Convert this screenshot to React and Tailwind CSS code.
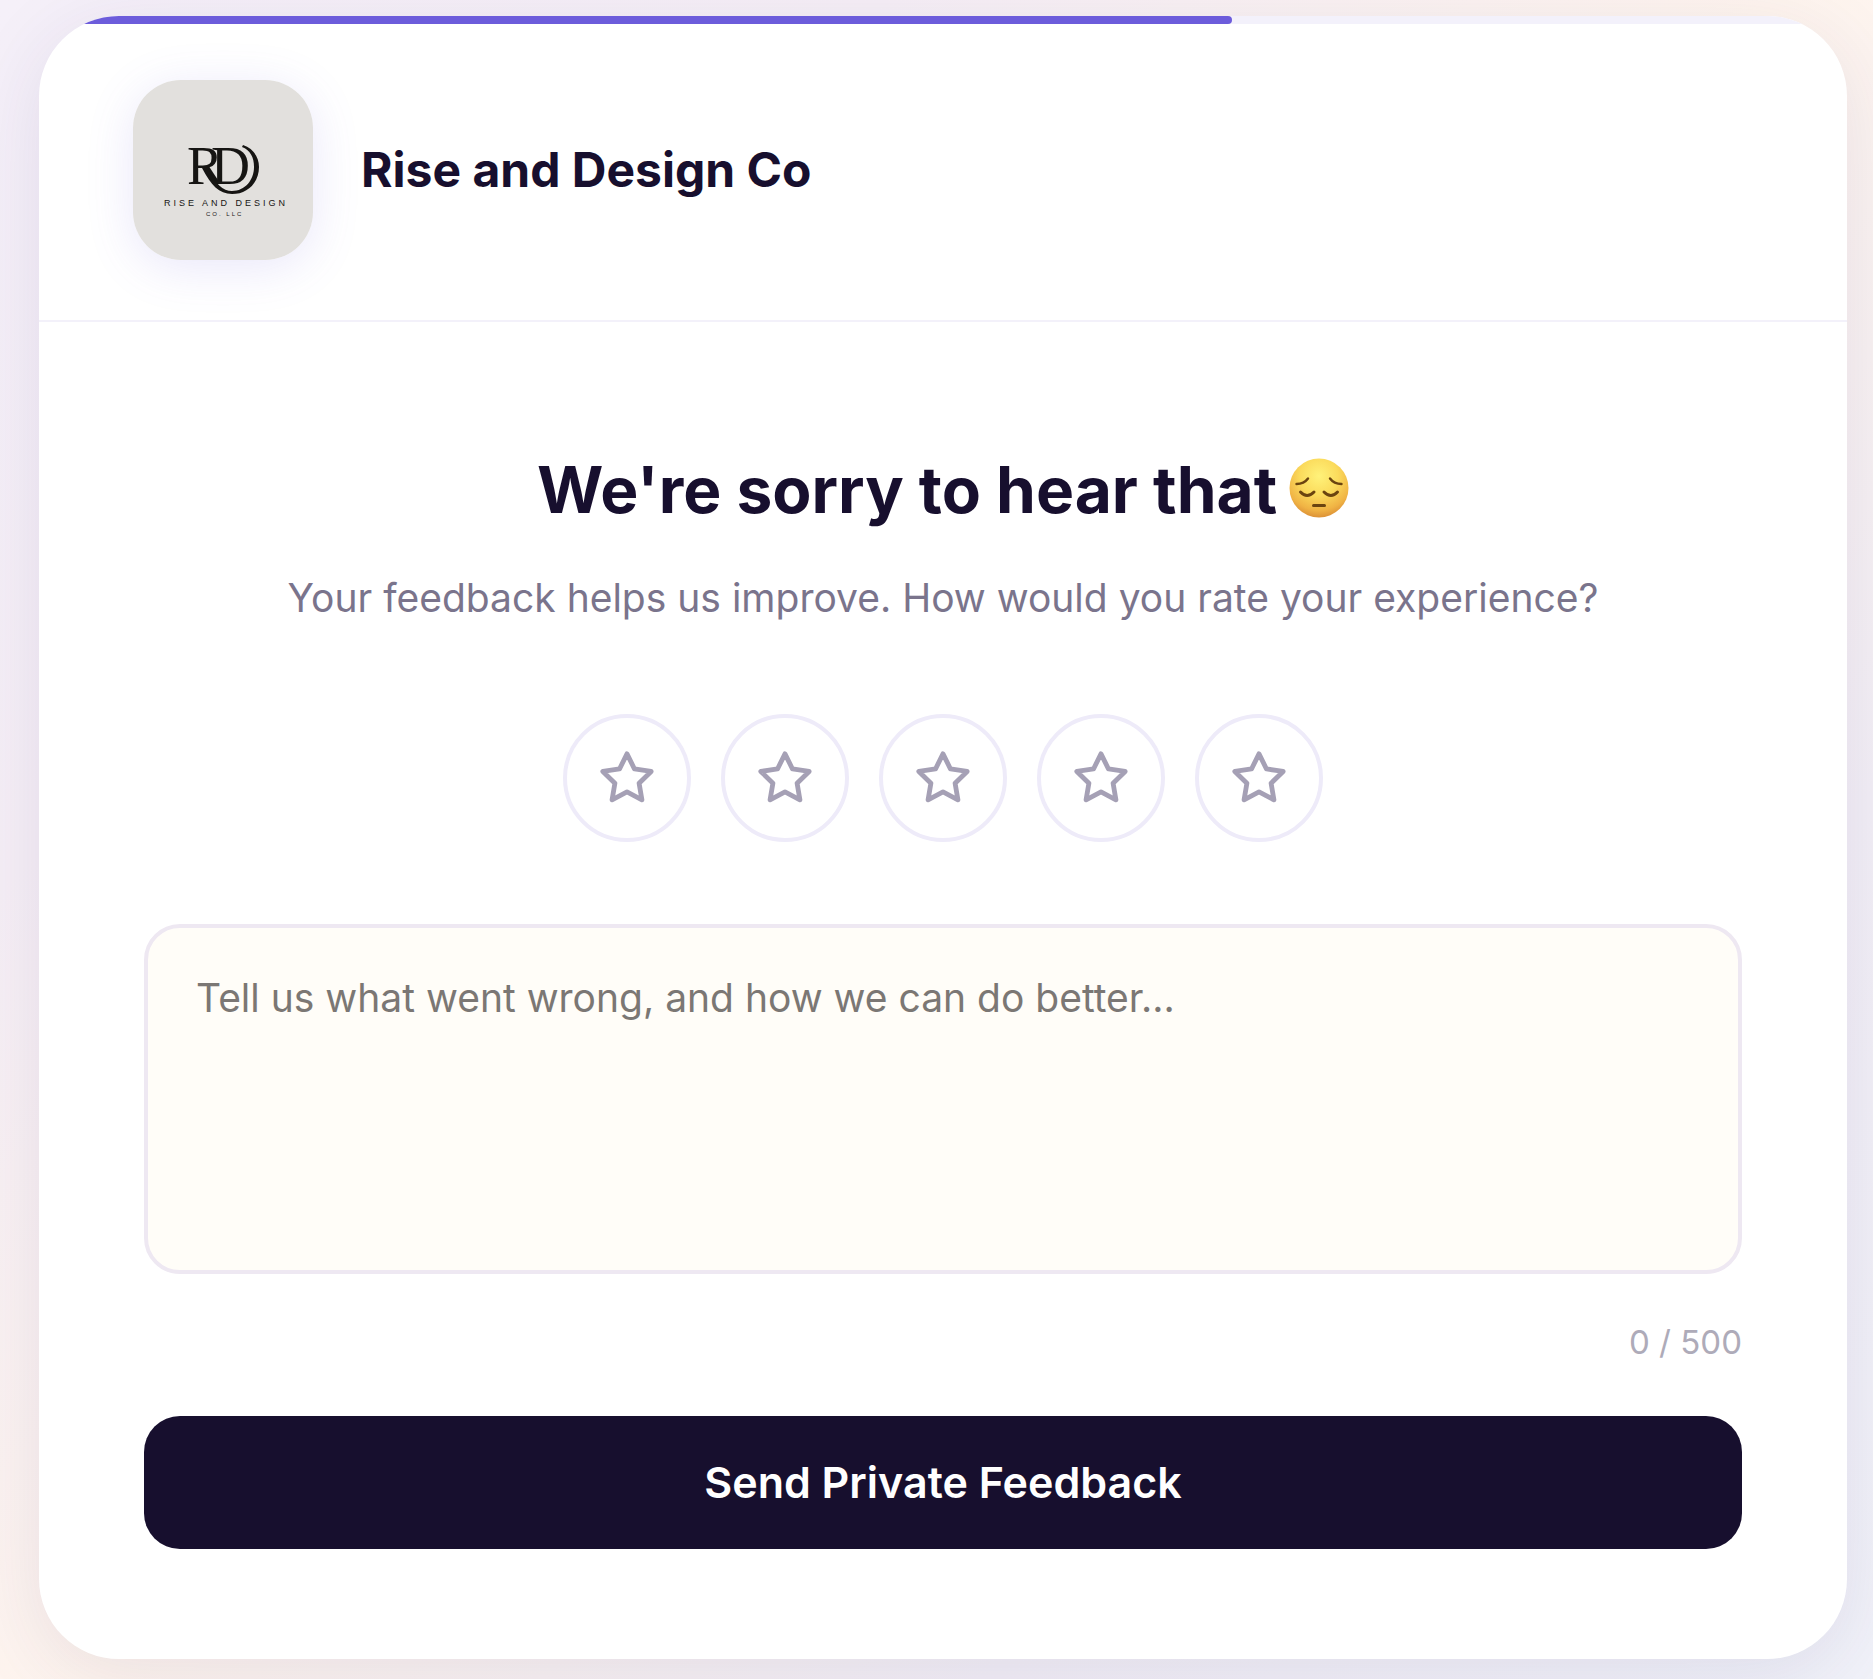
import { useState } from 'react'

const STARS = [1, 2, 3, 4, 5]
const MAX_LENGTH = 500
const PROGRESS = 66

const StarIcon = () => (
    <svg viewBox="0 0 24 24" className="w-[58px] h-[58px]" fill="none" stroke="currentColor" strokeWidth="2" strokeLinecap="round" strokeLinejoin="round" aria-hidden="true">
        <polygon points="12 2 15.09 8.26 22 9.27 17 14.14 18.18 21.02 12 17.77 5.82 21.02 7 14.14 2 9.27 8.91 8.26 12 2" />
    </svg>
)

const PensiveFace = () => (
    <svg viewBox="0 0 60 60" className="mb-1 w-[60px] h-[60px] shrink-0" role="img" aria-label="Pensive face">
        <defs>
            <radialGradient id="face" cx="0.5" cy="0.3" r="0.72">
                <stop offset="0" stopColor="#fff27a" />
                <stop offset="0.45" stopColor="#fbdb5c" />
                <stop offset="0.8" stopColor="#f0b344" />
                <stop offset="1" stopColor="#d98c35" />
            </radialGradient>
        </defs>
        <circle cx="30" cy="30" r="29.5" fill="url(#face)" />
        <g fill="none" stroke="#6b4410" strokeLinecap="round">
            <path d="M7.500 26 Q15 26 19 20.500" strokeWidth="2.400" />
            <path d="M52.500 26 Q45 26 41 20.500" strokeWidth="2.400" />
            <path d="M11.500 34 Q18 41 25 34" strokeWidth="3" />
            <path d="M35 34 Q42 41 48.500 34" strokeWidth="3" />
            <path d="M24.500 47.500 H35.500" strokeWidth="3" />
        </g>
    </svg>
)

const BrandLogo = () => (
    <svg viewBox="0 0 180 180" className="w-full h-full" role="img" aria-label="Rise and Design">
        <rect width="180" height="180" fill="#e2e0dd" />
        <g fill="#161513">
            <text x="54 78" y="104" fontSize="54" fontFamily="'Liberation Serif', serif">RD</text>
            <text x="31" y="126" fontSize="9" letterSpacing="3" fontFamily="'Liberation Sans', sans-serif">RISE AND DESIGN</text>
            <text x="73" y="136" fontSize="6" letterSpacing="2" fontFamily="'Liberation Sans', sans-serif">CO. LLC</text>
        </g>
        {/* Swoosh running from the monogram's leg around its right side */}
        <path d="M69 88 L75 88 C82 104 90 111 99 111 C112 111 121 100 121 87 C121 77 117 70 109 67 L110 65 C120 68 126 77 126 87 C126 103 114 114 99 114 C86 114 78 105 69 88 Z" fill="#161513" />
    </svg>
)

const App = () => {
    const [rating, setRating] = useState(0)
    const [feedback, setFeedback] = useState('')

    return (
        <div className="min-h-screen overflow-hidden bg-[linear-gradient(135deg,#f5f0f9_0%,#f6eff6_25%,#fff5ee_50%,#f3eff6_75%,#f1f2f9_100%)] pt-4 pb-5 pl-[39px] pr-[26px] font-['Inter',sans-serif] text-[#170f2e]">
            <main className="overflow-hidden rounded-[80px] bg-white shadow-[0_16px_80px_rgba(50,35,110,0.1)]">
                {/* Progress */}
                <div className="h-2 bg-[#f3f1fb]">
                    <div className="h-full rounded-r-full bg-[#6c5cdb]" style={{ width: `${PROGRESS}%` }}></div>
                </div>

                {/* Brand */}
                <header className="flex items-center gap-12 border-b-2 border-[#f3f1fa] px-[94px] pt-14 pb-[60px]">
                    <div className="w-[180px] h-[180px] shrink-0 overflow-hidden rounded-[48px] shadow-[0_8px_48px_rgba(108,92,219,0.15)]">
                        <BrandLogo />
                    </div>
                    <p className="text-5xl font-bold">Rise and Design Co</p>
                </header>

                <form className="px-[105px] pt-32 pb-[110px]" onSubmit={(e) => e.preventDefault()}>
                    <h1 className="flex items-center justify-center gap-3 text-[64px] leading-[80px] font-bold">
                        We're sorry to hear that
                        <PensiveFace />
                    </h1>
                    <p className="mt-9 text-center text-[39px] leading-[64px] text-[#7a748c]">
                        Your feedback helps us improve. How would you rate your experience?
                    </p>

                    {/* Rating */}
                    <div className="mt-21 flex justify-center gap-[30px]">
                        {STARS.map((star) => (
                            <button
                                key={star}
                                type="button"
                                aria-label={`${star} star`}
                                onClick={() => setRating(star)}
                                className={`flex h-32 w-32 items-center justify-center rounded-full border-4 border-[#eeebf9] ${star <= rating ? 'text-[#6c5cdb]' : 'text-[#a5a0b5]'}`}
                            >
                                <StarIcon />
                            </button>
                        ))}
                    </div>

                    <textarea
                        aria-label="Your feedback"
                        value={feedback}
                        maxLength={MAX_LENGTH}
                        onChange={(e) => setFeedback(e.target.value)}
                        placeholder="Tell us what went wrong, and how we can do better..."
                        className="mt-[82px] block h-[350px] w-full resize-none rounded-[36px] border-4 border-[#eee8f2] bg-[#fffdf8] px-12 py-10 text-[39px] leading-[60px] outline-none placeholder:text-[#7b7774]"
                    />
                    <p className="mt-12 text-right text-[33px] leading-[40px] text-[#aeabb9]">{feedback.length} / {MAX_LENGTH}</p>

                    <button type="submit" className="mt-[54px] h-[133px] w-full rounded-[36px] bg-[#170f2e] text-[43px] font-semibold text-white">
                        Send Private Feedback
                    </button>
                </form>
            </main>
        </div>
    )
}

export default App
